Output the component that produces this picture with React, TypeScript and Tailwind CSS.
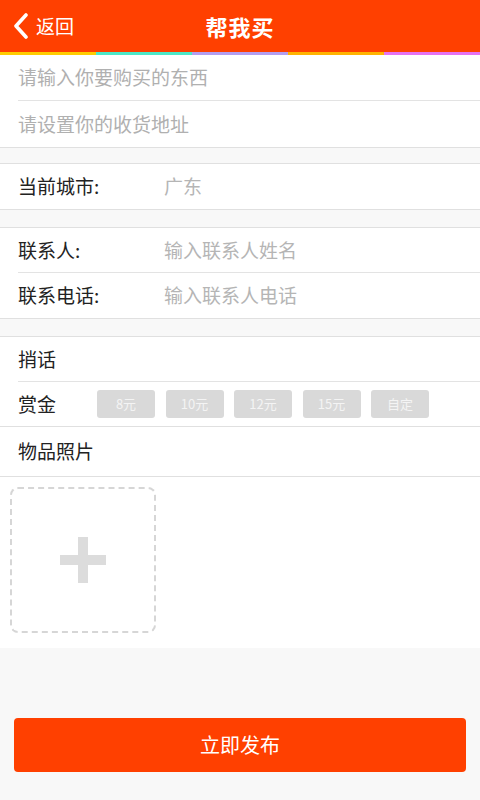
import { useState } from "react";

const stripe = ["bg-[#ffcc00]", "bg-[#4de8c8]", "bg-[#b39ef0]", "bg-[#ffb300]", "bg-[#e572f2]"];
const rewards = ["8元", "10元", "12元", "15元", "自定"];

function Row({ label, placeholder, last }: { label: string; placeholder?: string; last?: boolean }) {
  return (
    <div className={"ml-[18px] flex h-[45px] items-center " + (last ? "" : "border-b border-[#e3e3e3]")}>
      <span className="w-[146px] shrink-0 text-[19px] text-[#222]">{label}</span>
      {placeholder && <span className="text-[19px] text-[#b5b5b5]">{placeholder}</span>}
    </div>
  );
}

export default function App() {
  const [picked, setPicked] = useState<number | null>(null);

  return (
    <div
      className="flex h-[800px] w-[480px] flex-col bg-[#f8f8f8]"
      style={{ fontFamily: '"Noto Sans CJK SC", "Noto Sans", sans-serif' }}
    >
      <header className="relative flex h-[52px] items-center justify-center bg-[#ff4000] text-white">
        <button className="absolute left-[12px] top-0 flex h-full items-center gap-[6px]">
          <svg width="18" height="26" viewBox="0 0 18 26" fill="none">
            <path d="M14 2 L4 13 L14 24" stroke="white" strokeWidth="3.6" strokeLinecap="round" strokeLinejoin="round" />
          </svg>
          <span className="text-[19px]">返回</span>
        </button>
        <h1 className="text-[22px] font-bold tracking-[1px]">帮我买</h1>
      </header>
      <div className="flex h-[3px]">
        {stripe.map((c) => (
          <div key={c} className={"flex-1 " + c} />
        ))}
      </div>

      <section className="border-b border-[#e0e0e0] bg-white">
        <div className="ml-[18px] flex h-[46px] items-center border-b border-[#e3e3e3] text-[19px] text-[#b0b0b0]">
          请输入你要购买的东西
        </div>
        <div className="ml-[18px] flex h-[46px] items-center text-[19px] text-[#b0b0b0]">请设置你的收货地址</div>
      </section>

      <section className="mt-[15px] border-y border-[#e0e0e0] bg-white">
        <Row label="当前城市:" placeholder="广东" last />
      </section>

      <section className="mt-[17px] border-y border-[#e0e0e0] bg-white">
        <Row label="联系人:" placeholder="输入联系人姓名" />
        <Row label="联系电话:" placeholder="输入联系人电话" last />
      </section>

      <section className="mt-[17px] border-t border-[#e0e0e0] bg-white">
        <Row label="捎话" />
        <div className="flex h-[45px] items-center border-b border-[#e0e0e0] pl-[18px]">
          <span className="w-[79px] shrink-0 text-[19px] text-[#222]">赏金</span>
          <div className="flex gap-[10.5px]">
            {rewards.map((r, i) => (
              <button
                key={r}
                onClick={() => setPicked(i)}
                className={
                  "flex h-[28px] w-[58px] items-center justify-center rounded-[3px] text-[13px] text-[#f4f4f4] " +
                  (picked === i ? "bg-[#ff4000]" : "bg-[#d9d9d9]")
                }
              >
                {r}
              </button>
            ))}
          </div>
        </div>
        <div className="flex h-[50px] items-center border-b border-[#e0e0e0] pl-[18px] text-[19px] text-[#222]">
          物品照片
        </div>
        <div className="h-[171px] px-[10px] pt-[10px]">
          <button className="flex h-[146px] w-[146px] items-center justify-center rounded-[8px] border-2 border-dashed border-[#d6d6d6]">
            <svg width="46" height="46" viewBox="0 0 46 46">
              <rect x="18" y="0" width="10" height="46" fill="#dcdcdc" />
              <rect x="0" y="18" width="46" height="10" fill="#dcdcdc" />
            </svg>
          </button>
        </div>
      </section>

      <div className="px-[14px] pt-[70px]">
        <button className="flex h-[54px] w-full items-center justify-center rounded-[4px] bg-[#ff4000] text-[20px] text-white">
          立即发布
        </button>
      </div>
    </div>
  );
}
